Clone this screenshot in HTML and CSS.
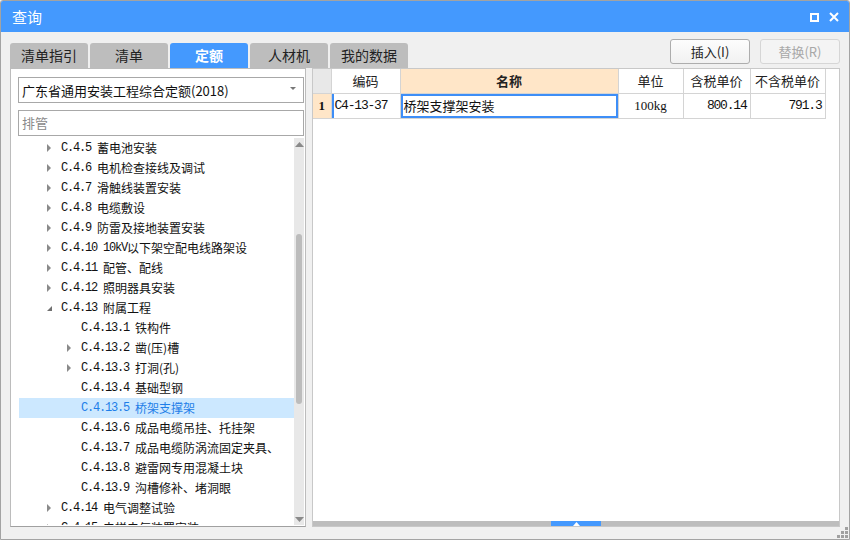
FILE: index.html
```html
<!DOCTYPE html>
<html lang="zh-CN">
<head>
<meta charset="utf-8">
<title>查询</title>
<link rel="stylesheet" href="styles.css">
</head>
<body>
<div class="window">
  <div class="titlebar">
    <span class="title">查询</span>
    <div class="winctl">
      <span class="maxbox"></span>
      <svg class="closex" width="10" height="10" viewBox="0 0 10 10"><path d="M1 1 L9 9 M9 1 L1 9" stroke="#fff" stroke-width="2"/></svg>
    </div>
  </div>
  <div class="content">
    <div class="toolbar">
      <div class="tabs">
        <div class="tab">清单指引</div>
        <div class="tab">清单</div>
        <div class="tab active">定额</div>
        <div class="tab">人材机</div>
        <div class="tab">我的数据</div>
      </div>
      <div class="buttons">
        <button class="btn">插入(I)</button>
        <button class="btn disabled">替换(R)</button>
      </div>
    </div>
    <div class="main">
      <div class="left">
        <div class="select">
          <span>广东省通用安装工程综合定额(2018)</span>
          <span class="caret"></span>
        </div>
        <div class="search">排管</div>
        <div class="treewrap">
          <div class="tree">
            <div class="row l1"><span class="arr r"></span><span class="code">C.4.5 </span>蓄电池安装</div>
            <div class="row l1"><span class="arr r"></span><span class="code">C.4.6 </span>电机检查接线及调试</div>
            <div class="row l1"><span class="arr r"></span><span class="code">C.4.7 </span>滑触线装置安装</div>
            <div class="row l1"><span class="arr r"></span><span class="code">C.4.8 </span>电缆敷设</div>
            <div class="row l1"><span class="arr r"></span><span class="code">C.4.9 </span>防雷及接地装置安装</div>
            <div class="row l1"><span class="arr r"></span><span class="code">C.4.10 10kV</span>以下架空配电线路架设</div>
            <div class="row l1"><span class="arr r"></span><span class="code">C.4.11 </span>配管、配线</div>
            <div class="row l1"><span class="arr r"></span><span class="code">C.4.12 </span>照明器具安装</div>
            <div class="row l1"><span class="arr d"></span><span class="code">C.4.13 </span>附属工程</div>
            <div class="row l2"><span class="arr"></span><span class="code">C.4.13.1 </span>铁构件</div>
            <div class="row l2"><span class="arr r"></span><span class="code">C.4.13.2 </span>凿(压)槽</div>
            <div class="row l2"><span class="arr r"></span><span class="code">C.4.13.3 </span>打洞(孔)</div>
            <div class="row l2"><span class="arr"></span><span class="code">C.4.13.4 </span>基础型钢</div>
            <div class="row l2 sel"><span class="arr"></span><span class="code">C.4.13.5 </span>桥架支撑架</div>
            <div class="row l2"><span class="arr"></span><span class="code">C.4.13.6 </span>成品电缆吊挂、托挂架</div>
            <div class="row l2"><span class="arr"></span><span class="code">C.4.13.7 </span>成品电缆防涡流固定夹具、</div>
            <div class="row l2"><span class="arr"></span><span class="code">C.4.13.8 </span>避雷网专用混凝土块</div>
            <div class="row l2"><span class="arr"></span><span class="code">C.4.13.9 </span>沟槽修补、堵洞眼</div>
            <div class="row l1"><span class="arr r"></span><span class="code">C.4.14 </span>电气调整试验</div>
            <div class="row l1"><span class="arr r"></span><span class="code">C.4.15 </span>电梯电气装置安装</div>
          </div>
          <div class="vscroll">
            <svg class="sarrow" width="9" height="5" viewBox="0 0 9 5"><path d="M0 5 L4.5 0 L9 5Z" fill="#8a8a8a"/></svg>
            <div class="vtrack"><div class="vthumb"></div></div>
            <svg class="sarrow" width="9" height="5" viewBox="0 0 9 5"><path d="M0 0 L4.5 5 L9 0Z" fill="#8a8a8a"/></svg>
          </div>
        </div>
      </div>
      <div class="right">
        <table class="grid">
          <colgroup>
            <col class="c0"><col class="c1"><col class="c2"><col class="c3"><col class="c4"><col class="c5">
          </colgroup>
          <thead>
            <tr>
              <th class="corner"></th>
              <th>编码</th>
              <th class="hl">名称</th>
              <th>单位</th>
              <th>含税单价</th>
              <th>不含税单价</th>
            </tr>
          </thead>
          <tbody>
            <tr>
              <td class="rn">1</td>
              <td class="mono codecell">C4-13-37</td>
              <td class="focus">桥架支撑架安装</td>
              <td class="unit">100kg</td>
              <td class="mono num">800.14</td>
              <td class="mono num">791.3</td>
            </tr>
          </tbody>
        </table>
        <div class="hscroll"><div class="hthumb"><svg width="7" height="4" viewBox="0 0 7 4"><path d="M0 4 L3.5 0 L7 4Z" fill="#fff"/></svg></div></div>
      </div>
    </div>
  </div>
  <div class="grip">
    <i class="g1"></i>
    <i class="g2"></i><i class="g3"></i>
    <i class="g4"></i><i class="g5"></i><i class="g6"></i>
  </div>
</div>
</body>
</html>
```

FILE: styles.css
```css
* { box-sizing: border-box; }
html, body { margin: 0; padding: 0; }
body {
  width: 850px;
  height: 540px;
  overflow: hidden;
  font-family: "Noto Sans CJK SC", "Liberation Sans", sans-serif;
  font-size: 13px;
  color: #222;
  background: #f0f0f0;
}
.window {
  position: relative;
  width: 850px;
  height: 540px;
  border: 1px solid #a3a3a3;
  border-radius: 3px 3px 0 0;
  display: flex;
  flex-direction: column;
  background: #f0f0f0;
  overflow: hidden;
}
.titlebar {
  height: 31px;
  flex: none;
  background: #4499fe;
  display: flex;
  align-items: center;
  justify-content: space-between;
  padding: 0 10px 0 11px;
  color: #fff;
}
.title { font-size: 15px; line-height: 31px; }
.winctl { display: flex; align-items: center; gap: 10px; }
.maxbox {
  width: 9px; height: 9px;
  border: 2px solid #fff;
  display: block;
  margin-top: 1px;
}
.closex { display: block; }
.content {
  flex: 1;
  min-height: 0;
  display: flex;
  flex-direction: column;
  padding: 7px 9px 12px 9px;
}
.toolbar {
  height: 29px;
  flex: none;
  display: flex;
  justify-content: space-between;
}
.tabs { display: flex; gap: 2px; align-self: flex-end; }
.tab {
  width: 78px;
  height: 25px;
  background: #bdbdbd;
  border-radius: 3px 3px 0 0;
  text-align: center;
  font-size: 14px;
  line-height: 25px;
  color: #222;
}
.tab.active { background: #4499fe; color: #fff; font-weight: bold; }
.buttons { display: flex; gap: 10px; align-items: flex-start; }
.btn {
  width: 80px;
  height: 25px;
  border: 1px solid #adadad;
  border-radius: 3px;
  background: linear-gradient(#fdfdfd, #f1f1f1);
  font-family: "Noto Sans CJK SC", "Liberation Sans", sans-serif;
  font-size: 13px;
  color: #222;
  padding: 0;
}
.btn.disabled { border-color: #d6d6d6; color: #a8a8a8; background: #f4f4f4; }
.main {
  flex: 1;
  min-height: 0;
  display: flex;
  gap: 6px;
}
.left {
  width: 296px;
  min-height: 0;
  background: #fff;
  border: 1px solid #bcbcbc;
  border-bottom-color: #a0a0a0;
  display: flex;
  flex-direction: column;
  padding: 8px 1px 1px 7px;
  overflow: hidden;
}
.select {
  height: 26px;
  flex: none;
  border: 1px solid #a8a8a8;
  display: flex;
  align-items: center;
  justify-content: space-between;
  padding: 0 7px 0 3px;
  font-size: 13px;
  color: #111;
}
.caret {
  width: 0; height: 0;
  border-left: 3px solid transparent;
  border-right: 3px solid transparent;
  border-top: 3px solid #777;
  margin-top: -4px;
}
.search {
  height: 26px;
  flex: none;
  margin-top: 7px;
  border: 1px solid #a8a8a8;
  padding: 0 3px;
  line-height: 24px;
  font-size: 13px;
  color: #8a8a8a;
}
.treewrap {
  flex: 1;
  margin-top: 2px;
  display: flex;
  min-height: 0;
  overflow: hidden;
}
.tree {
  flex: 1;
  margin-left: 1px;
  overflow: hidden;
}
.row {
  height: 20px;
  line-height: 20px;
  font-size: 12px;
  color: #111;
  white-space: pre;
  display: flex;
  align-items: center;
}
.row.l1 { padding-left: 27px; }
.row.l2 { padding-left: 47px; }
.row.sel { background: #cce8ff; color: #1e7ee8; }
.arr { width: 15px; height: 20px; position: relative; flex: none; }
.arr.r::before {
  content: "";
  position: absolute;
  left: 1px; top: 6px;
  border-top: 4px solid transparent;
  border-bottom: 4px solid transparent;
  border-left: 4px solid #8a8a8a;
}
.arr.d::before {
  content: "";
  position: absolute;
  left: 1px; top: 8px;
  border-left: 5px solid transparent;
  border-bottom: 5px solid #707070;
}
.code {
  font-family: "Liberation Mono", monospace;
  font-size: 12px;
  letter-spacing: -1.2px;
}
.vscroll {
  width: 10px;
  flex: none;
  background: #e8e8e8;
  display: flex;
  flex-direction: column;
  align-items: center;
  padding: 4px 0 3px;
}
.sarrow { display: block; flex: none; }
.vtrack { flex: 1; width: 100%; position: relative; }
.vthumb {
  position: absolute;
  left: 2px; right: 2px;
  top: 87px;
  height: 170px;
  background: #bcbcbc;
  border-radius: 3px;
}
.right {
  flex: 1;
  min-height: 0;
  background: #fff;
  border: 1px solid #c8c8c8;
  display: flex;
  flex-direction: column;
}
.grid {
  border-collapse: collapse;
  table-layout: fixed;
  width: 512px;
}
.c0 { width: 18px; }
.c1 { width: 69px; }
.c2 { width: 218px; }
.c3 { width: 65px; }
.c4 { width: 67px; }
.c5 { width: 75px; }
.grid th, .grid td {
  border: 1px solid #d4d4d4;
  padding: 0 3px;
  white-space: nowrap;
  overflow: hidden;
}
.grid tr:first-child th { border-top: none; }
.grid th:first-child, .grid td:first-child { border-left: none; }
.grid th {
  height: 24px;
  font-weight: normal;
  font-size: 13px;
  color: #222;
  text-align: center;
  background: #fff;
}
.grid th.corner { background: #e8e8e8; }
.grid th.hl { background: #ffe6c8; font-weight: bold; }
.grid td { height: 25px; font-size: 13px; color: #111; }
.grid td.rn {
  background: #ffe6c8;
  text-align: center;
  font-family: "Liberation Serif", serif;
  font-weight: bold;
  font-size: 13px;
  padding: 0;
}
.mono {
  font-family: "Liberation Mono", monospace;
  font-size: 12px;
  letter-spacing: -1.2px;
}
.codecell { box-shadow: inset 2px 0 0 #3e8ef7; }
.focus { box-shadow: inset 0 0 0 2px #3e8ef7; }
.unit { text-align: center; font-family: "Liberation Serif", serif; font-size: 13px; }
.num { text-align: right; }
.hscroll {
  margin-top: auto;
  height: 5px;
  flex: none;
  background: #bdbdbd;
  position: relative;
}
.hthumb {
  position: absolute;
  left: 238px;
  top: 0;
  width: 50px;
  height: 5px;
  background: #4499fe;
  display: flex;
  justify-content: center;
  align-items: center;
}
.hthumb svg { display: block; }
.grip {
  position: absolute;
  right: 1px;
  bottom: 1px;
  width: 11px;
  height: 11px;
}
.grip i {
  position: absolute;
  width: 3px;
  height: 3px;
  background: #a0a0a0;
}
.grip .g1 { left: 8px; top: 0; }
.grip .g2 { left: 4px; top: 4px; }
.grip .g3 { left: 8px; top: 4px; }
.grip .g4 { left: 0; top: 8px; }
.grip .g5 { left: 4px; top: 8px; }
.grip .g6 { left: 8px; top: 8px; }
```
